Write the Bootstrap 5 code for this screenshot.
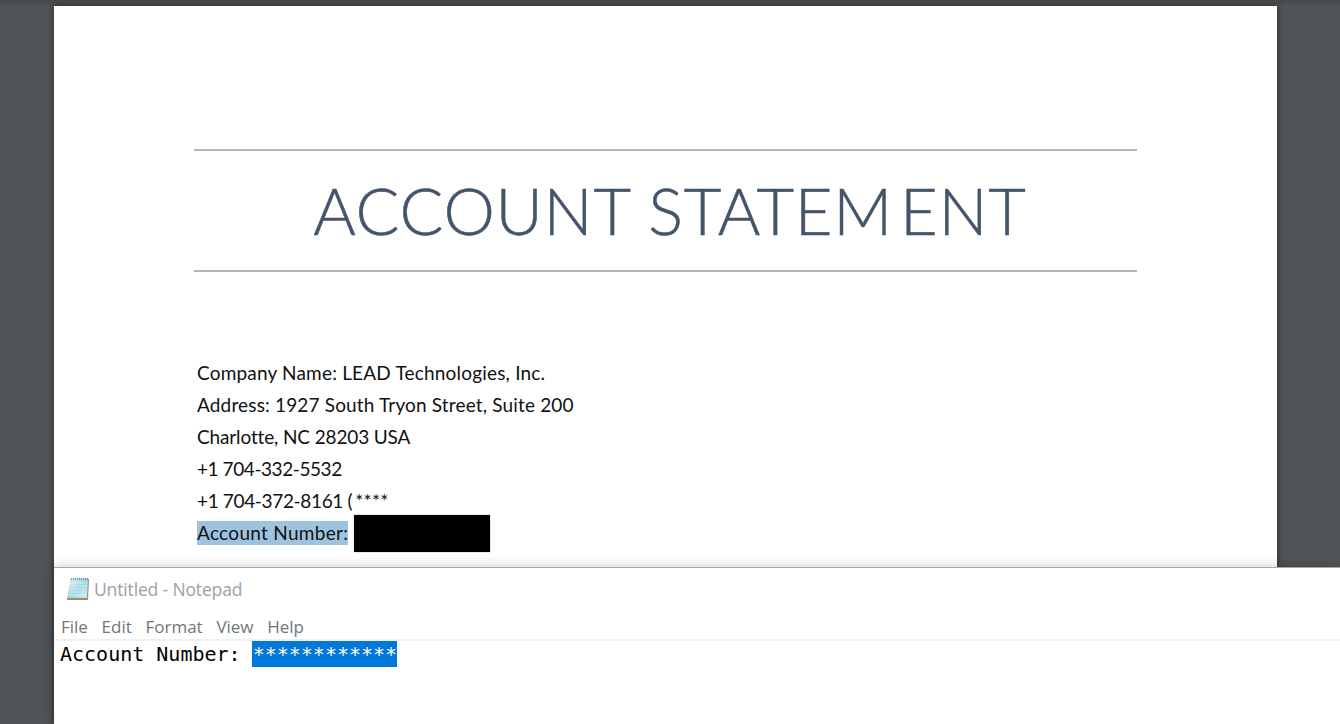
<!doctype html>
<html lang="en">
<head>
<meta charset="utf-8">
<title>Account Statement</title>
<link href="https://cdn.jsdelivr.net/npm/bootstrap@5.3.0/dist/css/bootstrap.min.css" rel="stylesheet">
<style>
html,body{height:100%;overflow:hidden}
body{background:#505457;position:relative}
.viewer{height:724px;padding:6px 63px 0 54px;background:linear-gradient(#46494c,#505457 6px)}
.sheet{height:718px;background:#fff;box-shadow:0 0 7px rgba(0,0,0,.55);padding:143px 140px 0;font-family:Lato,sans-serif}
.title-band{border-top:2px solid #b5b5b5;border-bottom:2px solid #b5b5b5;height:123px;color:#44546a;font-family:Lato,sans-serif;font-weight:300;font-size:65px;line-height:1;letter-spacing:.75px;text-align:center;-webkit-text-stroke:.5px #44546a}
.title-text{display:block;padding:27px 0 0 9px;white-space:nowrap}
.title-gap{margin-left:7px}
.info-lines{margin:85px 0 0 3px;font-size:19px;line-height:32px;color:#111}
.info-lines div{height:32px;white-space:nowrap}
.info-lines .ln-a{letter-spacing:.19px}
.info-lines .ln-b{letter-spacing:.16px}
.info-lines .ln-c{letter-spacing:-.14px}
.info-lines .ln-d{letter-spacing:-.43px}
.info-lines .ln-e{letter-spacing:-.35px}
.info-lines .ln-f{letter-spacing:.3px}
.stars{margin-left:3px;letter-spacing:.3px}
.hl{background:#9dc3de;line-height:24px;display:inline-block}
.redact{display:inline-block;width:136px;height:37px;background:#000;vertical-align:top;margin:-2px 0 0 0;box-shadow:0 0 1px #777}
.notepad{position:absolute;left:54px;right:0;top:567px;bottom:0;background:#fff;border-top:1px solid #a8a8a8;box-shadow:0 -2px 10px rgba(0,0,0,.16);font-family:"Open Sans",sans-serif}
.np-title{height:44px;padding:0 0 2px 12px;color:#99a1a9;font-size:17.5px;letter-spacing:-.15px}
.np-menu{height:29px;border-bottom:2px solid #f0f0f0;padding:3px 0 0 7px;gap:13.7px;color:#6f767c;font-size:17px}
.np-body{font-family:"DejaVu Sans Mono",monospace;font-size:20px;line-height:26px;color:#000;padding-left:6px;white-space:pre}
.np-sel{background:#0078d7;color:#fff;display:inline-block;padding-left:1px;margin-left:-1px}
.np-icon{width:24px;height:24px;flex:none;margin-right:4px}
</style>
</head>
<body>
<main class="viewer">
  <section class="sheet">
    <h1 class="title-band m-0"><span class="title-text">ACCOUNT STATEM<span class="title-gap">ENT</span></span></h1>
    <div class="info-lines">
      <div class="ln-a">Company Name: LEAD Technologies, Inc.</div>
      <div class="ln-b">Address: 1927 South Tryon Street, Suite 200</div>
      <div class="ln-c">Charlotte, NC 28203 USA</div>
      <div class="ln-d">+1 704-332-5532</div>
      <div class="ln-e">+1 704-372-8161 (<span class="stars">****</span></div>
      <div class="ln-f"><span class="hl">Account Number:</span> <span class="redact"></span></div>
    </div>
  </section>
</main>
<section class="notepad">
  <div class="np-title d-flex align-items-center">
    <svg class="np-icon" viewBox="0 0 24 24" aria-hidden="true">
      <defs><linearGradient id="npg" x1="0" y1="0" x2="1" y2="1"><stop offset="0" stop-color="#e0f4f8"/><stop offset=".55" stop-color="#9fd5e4"/><stop offset="1" stop-color="#cfeef4"/></linearGradient></defs>
      <path d="M5 2h18l-1 21H1z" fill="#9a8f72"/>
      <path d="M5 1h17l-1 20H1.500z" fill="url(#npg)"/>
      <path d="M4.600 6h17M4.200 9h17M3.800 12h17M3.400 15h17M3 18h17" stroke="#ffffff" stroke-opacity=".5" stroke-width="1"/>
      <path d="M5 2h17" stroke="#5f7f8c" stroke-width="1.600" stroke-dasharray="1 1"/>
    </svg>
    <span>Untitled - Notepad</span>
  </div>
  <nav class="np-menu d-flex align-items-center">
    <span>File</span><span>Edit</span><span>Format</span><span>View</span><span>Help</span>
  </nav>
  <div class="np-body">Account Number: <span class="np-sel">************</span></div>
</section>
</body>
</html>
